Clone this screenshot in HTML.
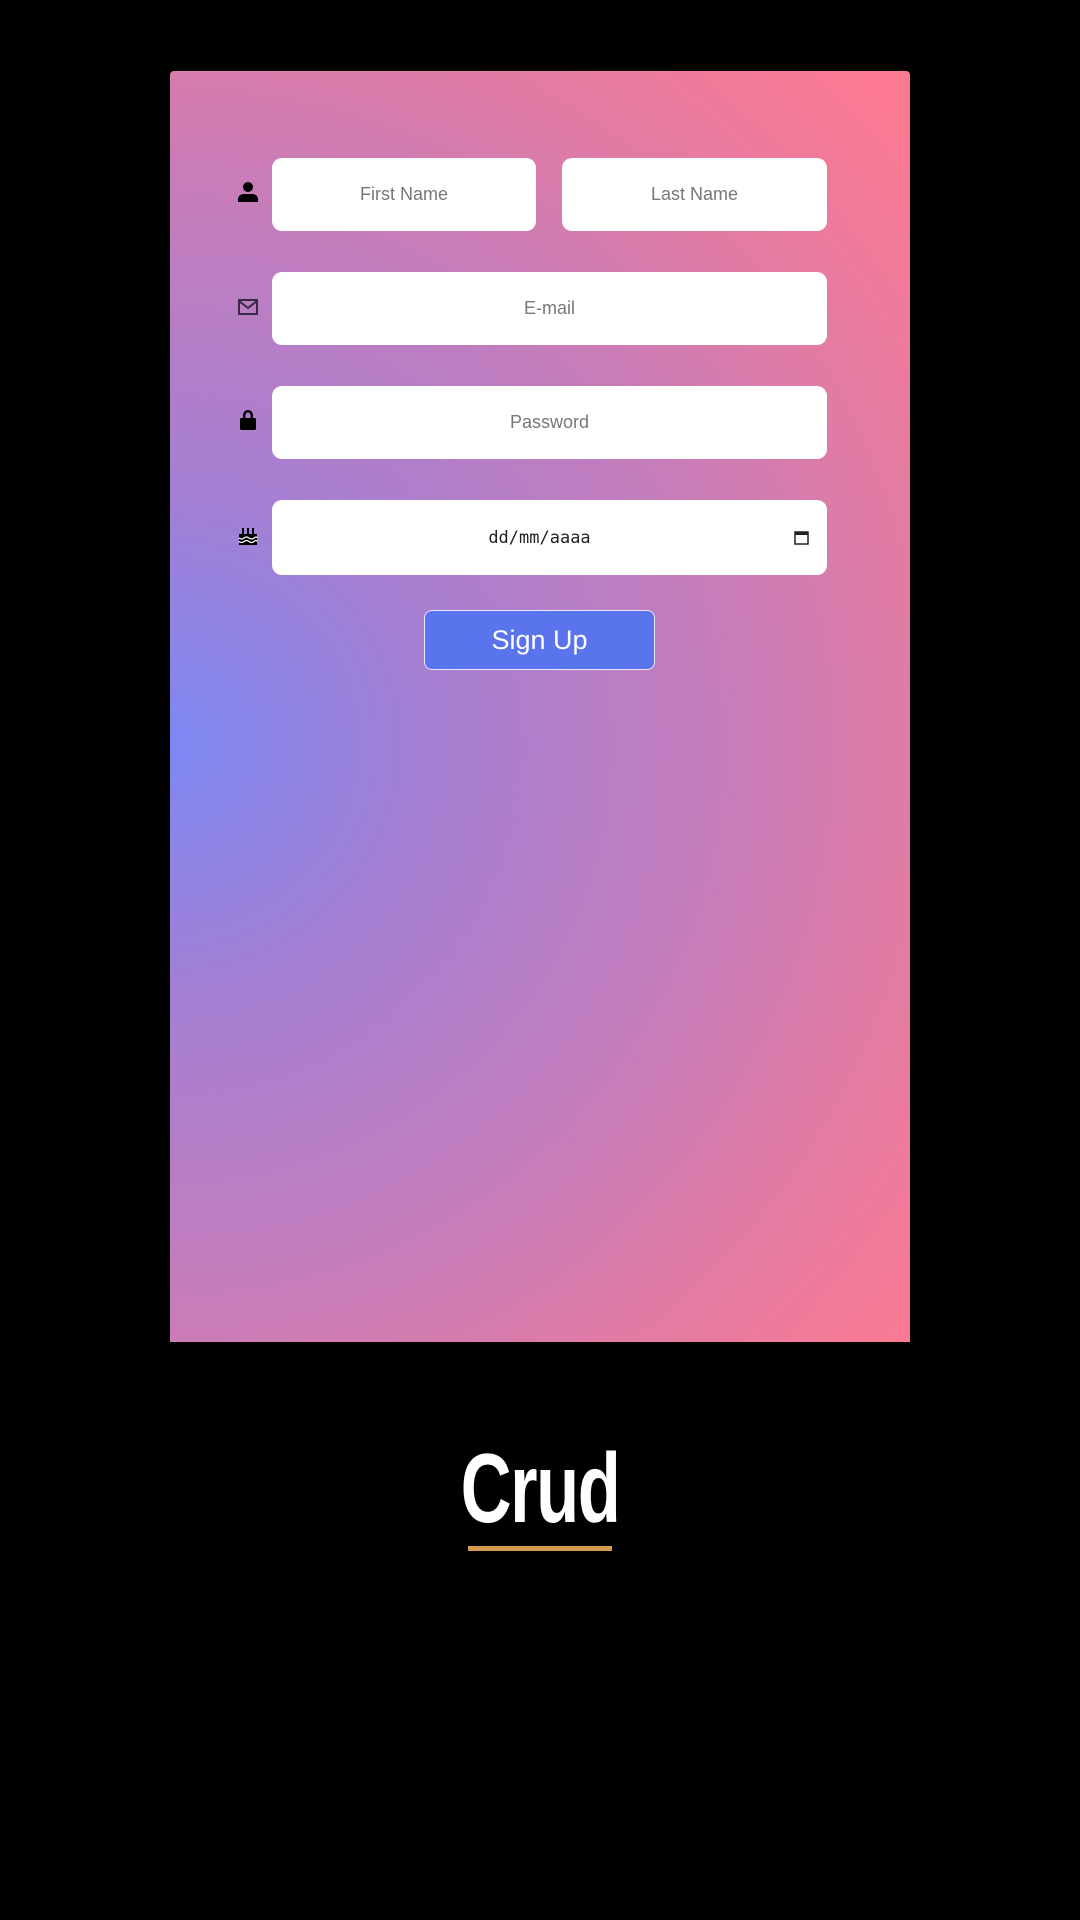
<!DOCTYPE html>
<html><head><meta charset="utf-8"><style>
body{margin:0;width:1080px;height:1920px;background:#000;position:relative;font-family:"Liberation Sans",sans-serif;overflow:hidden}
.card{position:absolute;left:170px;top:71px;width:740px;height:1271px;border-radius:4px 4px 0 0;background:radial-gradient(ellipse 130% 75% at 0% 53%,#7d88f2 0%,#a67fd2 28%,#c27dbd 55%,#e47ba2 80%,#fb7a92 100%)}
.in{position:absolute;background:#fff;border-radius:10px;color:#777;font-size:18px;display:flex;align-items:center;justify-content:center}
.ic{position:absolute;left:237px;width:22px;height:22px}
.btn{position:absolute;left:424px;top:610px;width:229px;height:58px;border:1.5px solid #e8e8f8;border-radius:8px;background:#5a74ee;color:#fff;font-size:27px;display:flex;align-items:center;justify-content:center}
.crud{position:absolute;left:0;width:1080px;top:1432px;text-align:center;color:#fff;font-family:"Liberation Sans Narrow","Liberation Sans",sans-serif;font-weight:bold;font-size:98px;letter-spacing:-2px;transform:scaleX(0.72)}
.ul{position:absolute;left:468px;top:1546px;width:144px;height:5px;background:#d49a50}
</style></head><body>
<div class="card"></div>
<svg class="ic" style="top:181px" viewBox="0 0 22 22"><circle cx="11" cy="6" r="5"/><path d="M1 21v-3c0-3 3-5 6-5h8c3 0 6 2 6 5v3z"/></svg>
<svg class="ic" style="top:296px" viewBox="0 0 22 22"><rect x="2" y="4" width="18" height="14" fill="none" stroke="#3a2a48" stroke-width="2"/><path d="M2 5l9 7 9-7" fill="none" stroke="#3a2a48" stroke-width="2"/></svg>
<svg class="ic" style="top:408px" viewBox="0 0 22 22"><path d="M6 10V7a5 5 0 0110 0v3h-2.5V7a2.5 2.5 0 00-5 0v3z"/><rect x="3" y="10" width="16" height="12" rx="1.5"/></svg>
<svg class="ic" style="top:524px" viewBox="0 0 22 22"><rect x="5" y="4" width="2" height="6"/><rect x="10" y="4" width="2" height="6"/><rect x="15" y="4" width="2" height="6"/><rect x="2" y="10" width="18" height="11"/><path d="M2 14q2.5 2 5 0t5 0 5 0 3 0" stroke="#fff" fill="none" stroke-width="1.2"/><path d="M2 17.5q2.5 2 5 0t5 0 5 0 3 0" stroke="#fff" fill="none" stroke-width="1.2"/></svg>
<div class="in" style="left:272px;top:158px;width:264px;height:73px">First Name</div>
<div class="in" style="left:562px;top:158px;width:265px;height:73px">Last Name</div>
<div class="in" style="left:272px;top:272px;width:555px;height:73px">E-mail</div>
<div class="in" style="left:272px;top:386px;width:555px;height:73px">Password</div>
<div class="in" style="left:272px;top:500px;width:555px;height:75px;color:#222;font-family:'DejaVu Sans Mono','Liberation Mono',monospace;font-size:17px;box-sizing:border-box;padding-right:20px">dd/mm/aaaa
<svg style="position:absolute;right:18px;top:30px" width="15" height="15" viewBox="0 0 15 15"><rect x="1" y="2" width="13" height="12" fill="none" stroke="#222" stroke-width="1.5"/><rect x="1" y="2" width="13" height="3" fill="#222"/></svg></div>
<div class="btn">Sign Up</div>
<div class="crud">Crud</div>
<div class="ul"></div>
</body></html>
